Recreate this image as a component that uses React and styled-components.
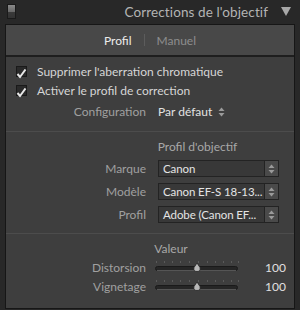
import React from 'react';
import styled, { createGlobalStyle } from 'styled-components';

const Global = createGlobalStyle`
  html, body {
    margin: 0;
    padding: 0;
    background: #282828;
  }
  body {
    font-family: Lato, "Open Sans", sans-serif;
  }
`;

const Page = styled.div`
  width: 300px;
  height: 310px;
  background: #282828;
  display: flex;
  flex-direction: column;
  overflow: hidden;
`;

const Header = styled.div`
  height: 23px;
  display: flex;
  align-items: center;
  padding: 0 9px 0 7px;
`;

const Toggle = styled.div`
  width: 7px;
  height: 13px;
  border: 1px solid #1a1a1a;
  background: linear-gradient(#8a8a8a 0%, #6a6a6a 50%, #3a3a3a 52%, #333 100%);
`;

const Title = styled.div`
  margin-left: auto;
  color: #b4b4b4;
  font-size: 13.5px;
  letter-spacing: 0.1px;
`;

const Caret = styled.div`
  margin-left: 13px;
  width: 0;
  height: 0;
  border-left: 5px solid transparent;
  border-right: 5px solid transparent;
  border-top: 9px solid #a8a8a8;
`;

const Panel = styled.div`
  margin: 1px 5px 0;
  height: 283px;
  border: 1px solid #161616;
  background: #3e3e3e;
  display: flex;
  flex-direction: column;
`;

const Tabs = styled.div`
  height: 30px;
  background: #484848;
  border-bottom: 2px solid #1e1e1e;
  display: flex;
  justify-content: center;
  align-items: center;
  gap: 12px;
  font-size: 12px;
`;

const Tab = styled.span`
  color: ${p => (p.active ? '#ececec' : '#8e8e8e')};
`;

const TabSep = styled.span`
  width: 1px;
  height: 12px;
  background: #5c5c5c;
`;

const Section = styled.div`
  display: flex;
  flex-direction: column;
  padding: ${p => p.pad || '0'};
  border-bottom: ${p => (p.last ? 'none' : '1px solid #4c4c4c')};
`;

const Check = styled.label`
  display: flex;
  align-items: center;
  height: 19px;
  padding-left: 10px;
  color: #d6d6d6;
  font-size: 12px;
`;

const Box = styled.span`
  position: relative;
  width: 9px;
  height: 9px;
  border: 1px solid #1a1a1a;
  background: #2a2a2a;
  margin-right: 10px;
  display: inline-block;
`;

const Grid = styled.div`
  display: grid;
  grid-template-columns: 140px 1fr;
  column-gap: 12px;
  align-items: center;
`;

const Label = styled.span`
  text-align: right;
  color: #a0a0a0;
  font-size: 12px;
`;

const Value = styled.span`
  color: #e2e2e2;
  font-size: 12px;
  display: flex;
  align-items: center;
  gap: 6px;
`;

const Heading = styled.div`
  color: #a8a8a8;
  font-size: 12px;
  text-align: center;
  padding-left: ${p => p.shift || 0}px;
  height: 18px;
  line-height: 18px;
`;

const Select = styled.div`
  width: 121px;
  height: 17px;
  border: 1px solid #232323;
  background: #383838;
  display: flex;
  align-items: stretch;
  box-sizing: border-box;
`;

const SelectText = styled.span`
  flex: 1;
  padding-left: 4px;
  color: #e4e4e4;
  font-size: 11.5px;
  letter-spacing: -0.1px;
  line-height: 15px;
  white-space: nowrap;
  overflow: hidden;
`;

const SelectBtn = styled.span`
  width: 13px;
  border-left: 1px solid #232323;
  background: #4a4a4a;
  display: flex;
  align-items: center;
  justify-content: center;
`;

const SliderRow = styled.div`
  display: grid;
  grid-template-columns: 140px 84px 1fr;
  column-gap: 9px;
  align-items: center;
  height: 19px;
`;

const Track = styled.div`
  position: relative;
  height: 19px;
`;

const Number = styled.span`
  text-align: right;
  padding-right: 8px;
  color: #e0e0e0;
  font-size: 12px;
`;

const Arrows = () => (
  <svg width="7" height="10" viewBox="0 0 7 10">
    <path d="M3.5 0.5 L6.5 4 L0.5 4 Z" fill="#9a9a9a" />
    <path d="M3.5 9.5 L6.5 6 L0.5 6 Z" fill="#9a9a9a" />
  </svg>
);

const Tick = () => (
  <svg width="11" height="10" viewBox="0 0 11 10" style={{ position: 'absolute', left: -1, top: 2 }}>
    <path d="M1.5 5 L4 8 L9.5 0.5" stroke="#e8e8e8" strokeWidth="2" fill="none" />
  </svg>
);

const Slider = () => (
  <svg width="84" height="19" viewBox="0 0 84 19">
    {[0, 8, 16, 24, 33, 42, 51, 59, 67, 75, 82].map(x => (
      <line key={x} x1={x + 1.5} y1="3" x2={x + 1.5} y2="5" stroke="#5a5a5a" />
    ))}
    <rect x="0.5" y="8.5" width="82" height="4" rx="2" fill="#262626" stroke="#1a1a1a" />
    <line x1="2" y1="12.5" x2="81" y2="12.5" stroke="#555" />
    <path d="M42 5 L45 9.5 Q46 13.5 42 13.5 Q38 13.5 39 9.5 Z" fill="#b8b8b8" stroke="#222" strokeWidth="0.8" />
  </svg>
);

const SelectField = ({ children }) => (
  <Select>
    <SelectText>{children}</SelectText>
    <SelectBtn><Arrows /></SelectBtn>
  </Select>
);

export default function App() {
  return (
    <Page>
      <Global />
      <Header>
        <Toggle />
        <Title>Corrections de l'objectif</Title>
        <Caret />
      </Header>
      <Panel>
        <Tabs>
          <Tab active>Profil</Tab>
          <TabSep />
          <Tab>Manuel</Tab>
        </Tabs>
        <Section pad="5px 0 8px">
          <Check><Box><Tick /></Box>Supprimer l'aberration chromatique</Check>
          <Check><Box><Tick /></Box>Activer le profil de correction</Check>
          <Grid style={{ height: 23 }}>
            <Label>Configuration</Label>
            <Value>Par défaut <Arrows /></Value>
          </Grid>
        </Section>
        <Section pad="6px 0 10px">
          <Heading shift={95}>Profil d'objectif</Heading>
          <Grid style={{ rowGap: 6, marginTop: 4 }}>
            <Label>Marque</Label>
            <SelectField>Canon</SelectField>
            <Label>Modèle</Label>
            <SelectField>Canon EF-S 18-13...</SelectField>
            <Label>Profil</Label>
            <SelectField>Adobe (Canon EF...</SelectField>
          </Grid>
        </Section>
        <Section pad="6px 0 0" last>
          <Heading shift={42}>Valeur</Heading>
          <SliderRow>
            <Label>Distorsion</Label>
            <Track><Slider /></Track>
            <Number>100</Number>
          </SliderRow>
          <SliderRow>
            <Label>Vignetage</Label>
            <Track><Slider /></Track>
            <Number>100</Number>
          </SliderRow>
        </Section>
      </Panel>
    </Page>
  );
}
